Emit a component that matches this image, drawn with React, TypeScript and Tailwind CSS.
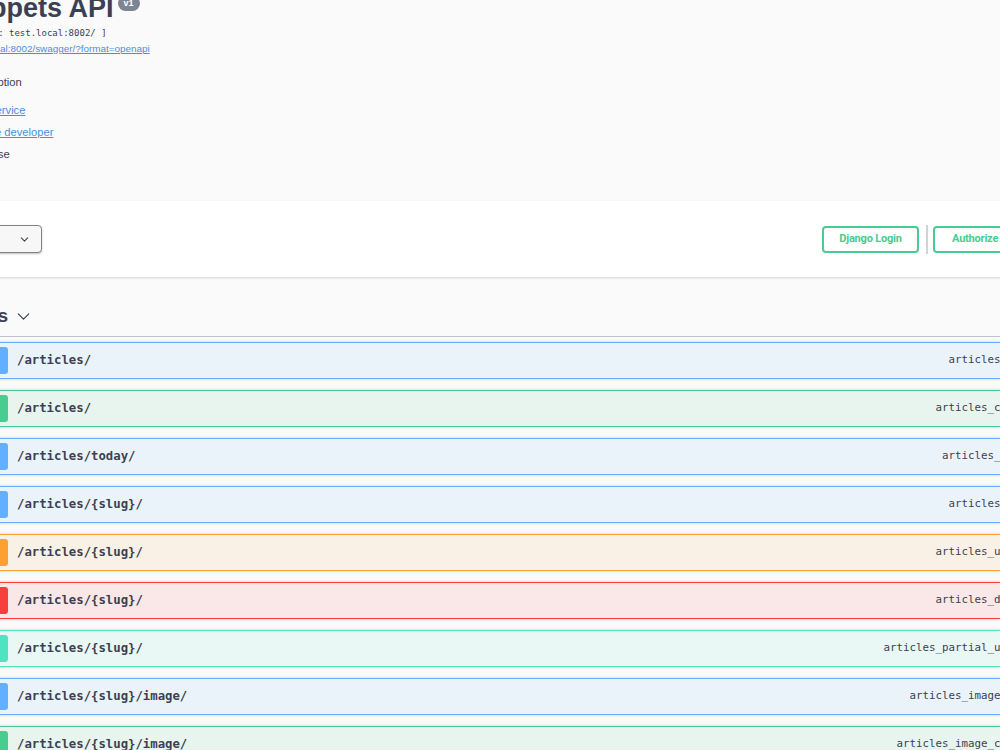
import React from 'react';

type Method = 'get' | 'post' | 'put' | 'delete' | 'patch';

interface Operation {
  method: Method;
  path: string;
  operationId: string;
}

const methodStyles: Record<Method, { row: string; badge: string }> = {
  get: { row: 'bg-[#ebf3fa] border-[#61affe]', badge: 'bg-[#61affe]' },
  post: { row: 'bg-[#e8f5ef] border-[#49cc90]', badge: 'bg-[#49cc90]' },
  put: { row: 'bg-[#faf1e6] border-[#fca130]', badge: 'bg-[#fca130]' },
  delete: { row: 'bg-[#fae7e7] border-[#f93e3e]', badge: 'bg-[#f93e3e]' },
  patch: { row: 'bg-[#e9f8f4] border-[#50e3c2]', badge: 'bg-[#50e3c2]' },
};

const operations: Operation[] = [
  { method: 'get', path: '/articles/', operationId: 'articles_list' },
  { method: 'post', path: '/articles/', operationId: 'articles_create' },
  { method: 'get', path: '/articles/today/', operationId: 'articles_today' },
  { method: 'get', path: '/articles/{slug}/', operationId: 'articles_read' },
  { method: 'put', path: '/articles/{slug}/', operationId: 'articles_update' },
  { method: 'delete', path: '/articles/{slug}/', operationId: 'articles_delete' },
  { method: 'patch', path: '/articles/{slug}/', operationId: 'articles_partial_update' },
  { method: 'get', path: '/articles/{slug}/image/', operationId: 'articles_image_read' },
  { method: 'post', path: '/articles/{slug}/image/', operationId: 'articles_image_create' },
];

const ChevronDown: React.FC<{ className?: string; strokeWidth?: number }> = ({ className, strokeWidth = 1.6 }) => (
  <svg viewBox="0 0 20 20" className={className} fill="none" stroke="currentColor" strokeWidth={strokeWidth}>
    <path d="M3 6.5l7 7 7-7" strokeLinecap="round" strokeLinejoin="round" />
  </svg>
);

const OperationRow: React.FC<{ op: Operation }> = ({ op }) => {
  const style = methodStyles[op.method];
  return (
    <div
      className={`flex items-center h-[37px] mb-[11px] border rounded-[4px] pl-[4px] shadow-[0_0_3px_rgba(0,0,0,0.19)] ${style.row}`}
    >
      {/* method badge, mostly scrolled out of view */}
      <span
        className={`w-[64px] h-[27px] rounded-[3px] flex items-center justify-center text-white font-bold text-[11px] uppercase font-['Liberation_Sans',Arial,sans-serif] ${style.badge}`}
      >
        {op.method}
      </span>
      <span className="pl-[9px] text-[12.3px] font-bold text-[#3b4151] font-['DejaVu_Sans_Mono',monospace]">
        {op.path}
      </span>
      <span className="ml-auto mr-[35px] text-[10.8px] text-[#3b4151] font-['DejaVu_Sans_Mono',monospace]">
        {op.operationId}
      </span>
    </div>
  );
};

export default function App() {
  return (
    <div className="w-[1000px] h-[750px] overflow-hidden bg-[#fafafa] text-[#3b4151] font-['Liberation_Sans',Arial,sans-serif]">
      <div className="ml-[-61px] w-[1130px]">
        {/* Info */}
        <div className="h-[201px] pl-[5px] flex flex-col">
          <div className="flex items-start mt-[-5px] h-[27px]">
            <h2 className="ml-[4px] text-[27px] leading-none font-bold text-[#3b4151]">Snippets API</h2>
            <span className="ml-[4px] mt-[1px] h-[15px] px-[6px] rounded-full bg-[#7d8492] text-white text-[9px] font-bold leading-[15px]">
              v1
            </span>
          </div>
          <div className="mt-[5px] leading-[12px] text-[9px] font-['DejaVu_Sans_Mono',monospace] text-[#3b4151]">
            [ Base URL: test.local:8002/ ]
          </div>
          <div className="mt-[4px] leading-[12px] text-[9.9px]">
            <a className="text-[#4990e2] underline">http://test.local:8002/swagger/?format=openapi</a>
          </div>
          <p className="mt-[20px] leading-[14px] text-[11.2px]">Test description</p>
          <div className="mt-[14px] leading-[14px] text-[11.2px]">
            <a className="text-[#4990e2] underline">Terms of service</a>
          </div>
          <div className="mt-[8px] leading-[14px] text-[11.2px]">
            <a className="text-[#4990e2] underline">Contact the developer</a>
          </div>
          <div className="mt-[8px] leading-[14px] text-[11.4px]">BSD License</div>
        </div>

        {/* Schemes + auth */}
        <div className="h-[76px] bg-white shadow-[0_1px_2px_0_rgba(0,0,0,0.15)] flex items-center pr-[30px]">
          <div className="w-[103px] h-[28px] border-[1.5px] border-[#808186] rounded-[4px] bg-[#f7f7f7] shadow-[0_1px_2px_0_rgba(0,0,0,0.25)] flex items-center justify-end pr-[12px]">
            <ChevronDown className="w-[9px] h-[9px] text-[#3b4151]" strokeWidth={2.4} />
          </div>
          <button className="ml-auto w-[97px] h-[27px] border-2 border-[#49cc90] rounded-[4px] text-[#49cc90] font-bold text-[11px] tracking-[-0.2px] font-['Roboto',sans-serif]">
            Django Login
          </button>
          <div className="ml-[7px] w-[2px] h-[29px] bg-[#d3d3d3]" />
          <button className="ml-[5px] w-[106px] h-[27px] border-2 border-[#49cc90] rounded-[4px] text-[#49cc90] font-bold text-[11px] tracking-[-0.2px] flex items-center pl-[17px] font-['Roboto',sans-serif]">
            Authorize
            <svg viewBox="0 0 20 20" className="ml-[8px] w-[14px] h-[14px]" fill="currentColor">
              <path d="M15.8 8H14V5.6C14 2.7 12.3 1 10 1S6 2.7 6 5.6V8H4c-.6 0-1 .4-1 1v8c0 .6.4 1 1 1h12c.5 0 1-.4 1-1V9c0-.6-.6-1-1.2-1zM8 5.6C8 4 8.8 3 10 3s2 1 2 2.6V8H8V5.6z" />
            </svg>
          </button>
        </div>

        {/* Tag section */}
        <div className="mt-[20px] h-[40px] border-b border-[#c1c3c7] flex items-center pl-[2px]">
          <h3 className="text-[19.2px] font-bold text-[#3b4151]">articles</h3>
          <ChevronDown className="ml-[8px] w-[15px] h-[15px] text-[#3b4151]" />
        </div>
        <div className="mt-[5px]">
          {operations.map((op, i) => (
            <OperationRow key={i} op={op} />
          ))}
        </div>
      </div>
    </div>
  );
}
